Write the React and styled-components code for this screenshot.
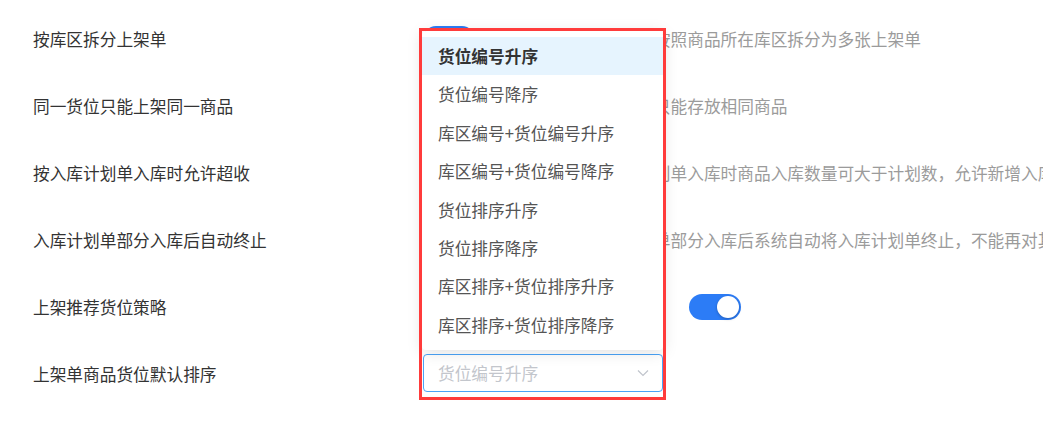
import React from "react";
import styled, { createGlobalStyle } from "styled-components";

const GlobalStyle = createGlobalStyle`
  html, body {
    margin: 0;
    padding: 0;
    background: #ffffff;
    overflow: hidden;
  }
  body {
    font-family: "Noto Sans CJK SC", "Noto Sans", sans-serif;
  }
`;

const Page = styled.div`
  padding: 20px 0 0 33px;
  width: 1043px;
  height: 421px;
  box-sizing: border-box;
  overflow: hidden;
`;

const Row = styled.div`
  display: flex;
  align-items: center;
  height: 38px;
  margin-bottom: 29px;
  position: relative;
  z-index: ${(p) => (p.$raised ? 2 : 1)};
`;

const Label = styled.div`
  width: 390px;
  flex-shrink: 0;
  font-size: 16.7px;
  color: #333333;
  white-space: nowrap;
`;

const Control = styled.div`
  display: flex;
  align-items: center;
  gap: 26px;
`;

const Switch = styled.div`
  position: relative;
  width: 52px;
  height: 26px;
  border-radius: 13px;
  background: #2c7cf6;
  flex-shrink: 0;
`;

const Knob = styled.span`
  position: absolute;
  top: 2px;
  right: 2px;
  width: 22px;
  height: 22px;
  border-radius: 50%;
  background: #ffffff;
  box-shadow: 0 1px 3px rgba(0, 0, 0, 0.25);
`;

const Desc = styled.div`
  margin-left: 12px;
  font-size: 16.7px;
  color: #9b9b9b;
  white-space: nowrap;
`;

const SelectWrap = styled.div`
  position: relative;
  top: -1px;
`;

const SelectBox = styled.div`
  width: 240px;
  height: 38px;
  box-sizing: border-box;
  border: 1px solid ${(p) => (p.$focused ? "#4aa3f7" : "#dcdfe6")};
  border-radius: 4px;
  background: #ffffff;
  display: flex;
  align-items: center;
  justify-content: space-between;
  padding: 0 12px 0 14px;
  font-size: 16.7px;
  color: ${(p) => (p.$placeholder ? "#c3c6cc" : "#555555")};
  white-space: nowrap;
`;

const Chevron = () => (
  <svg width="14" height="14" viewBox="0 0 14 14" fill="none">
    <path d="M2 4.5 L7 9.5 L12 4.5" stroke="#c0c4cc" strokeWidth="1.2" />
  </svg>
);

const Dropdown = styled.ul`
  position: absolute;
  left: -1px;
  bottom: calc(100% + 4px);
  width: 241px;
  margin: 0;
  padding: 6px 0;
  list-style: none;
  background: #ffffff;
  border-radius: 4px;
  box-shadow: 0 2px 16px rgba(0, 0, 0, 0.13);
  box-sizing: border-box;
`;

const Item = styled.li`
  height: 38.4px;
  display: flex;
  align-items: center;
  padding: 0 16px;
  font-size: 16.7px;
  white-space: nowrap;
  color: ${(p) => (p.$selected ? "#333333" : "#555555")};
  font-weight: ${(p) => (p.$selected ? 700 : 400)};
  background: ${(p) => (p.$selected ? "#e6f4fe" : "transparent")};
`;

const Marker = styled.div`
  position: absolute;
  left: -4px;
  top: -326px;
  width: 247px;
  height: 372px;
  box-sizing: border-box;
  border: 3px solid #ff3b3b;
  pointer-events: none;
`;

const options = [
  "货位编号升序",
  "货位编号降序",
  "库区编号+货位编号升序",
  "库区编号+货位编号降序",
  "货位排序升序",
  "货位排序降序",
  "库区排序+货位排序升序",
  "库区排序+货位排序降序",
];

const toggleRows = [
  {
    label: "按库区拆分上架单",
    desc: "开启后，生成上架单时按照商品所在库区拆分为多张上架单",
  },
  {
    label: "同一货位只能上架同一商品",
    desc: "开启后，表示同一货位只能存放相同商品",
  },
  {
    label: "按入库计划单入库时允许超收",
    desc: "开启后，按照该入库计划单入库时商品入库数量可大于计划数，允许新增入库商品",
  },
  {
    label: "入库计划单部分入库后自动终止",
    desc: "开启后，当该入库计划单部分入库后系统自动将入库计划单终止，不能再对其进行入库",
  },
];

export default function App() {
  return (
    <>
      <GlobalStyle />
      <Page>
        {toggleRows.map((r) => (
          <Row key={r.label}>
            <Label>{r.label}</Label>
            <Control>
              <Switch>
                <Knob />
              </Switch>
            </Control>
            <Desc>{r.desc}</Desc>
          </Row>
        ))}
        <Row>
          <Label>上架推荐货位策略</Label>
          <Control>
            <SelectBox>
              按货位排序推荐
              <Chevron />
            </SelectBox>
            <Switch>
              <Knob />
            </Switch>
          </Control>
        </Row>
        <Row $raised>
          <Label>上架单商品货位默认排序</Label>
          <Control>
            <SelectWrap>
              <Dropdown>
                {options.map((o, i) => (
                  <Item key={o} $selected={i === 0}>
                    {o}
                  </Item>
                ))}
              </Dropdown>
              <SelectBox $focused $placeholder>
                货位编号升序
                <Chevron />
              </SelectBox>
              <Marker />
            </SelectWrap>
          </Control>
        </Row>
      </Page>
    </>
  );
}
